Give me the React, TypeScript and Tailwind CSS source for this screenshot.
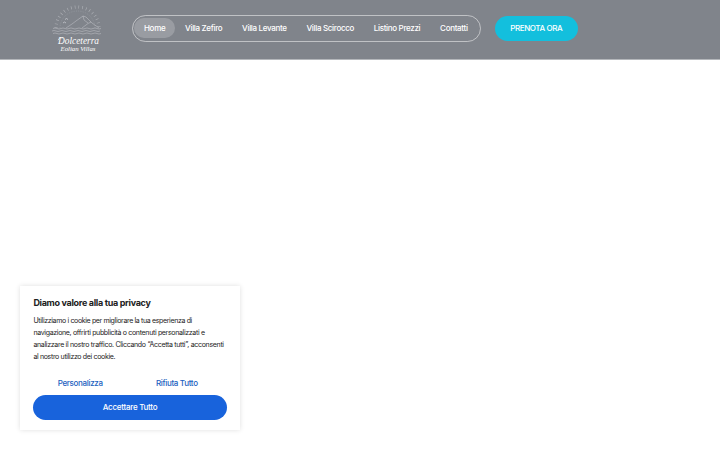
import React from 'react';

const navItems = [
  { label: 'Home', active: true },
  { label: 'Villa Zefiro' },
  { label: 'Villa Levante' },
  { label: 'Villa Scirocco' },
  { label: 'Listino Prezzi' },
  { label: 'Contatti' },
];

const Logo: React.FC = () => (
  <svg width="53" height="50" viewBox="0 0 53 50" fill="none" stroke="#dfe1e5" className="shrink-0">
    {/* sun rays */}
    <path d="M5 24A21.5 21 0 0 1 48 24" strokeWidth="3.2" strokeDasharray="0.6 3.2" opacity="0.5" />
    <path d="M9 24A17.5 17 0 0 1 44 24" strokeWidth="0.5" strokeDasharray="1 1.3" opacity="0.35" />
    {/* islands */}
    <path d="M15 24L21 20L25 17L32 12L35 13L41 19L48 24M31 24L37 19.5L40 18M32 12L33 16L37 19" strokeWidth="0.6" opacity="0.6" />
    <path d="M14 15.5l1.5-1 1.5 1M12 19l1.5-1 1.5 1" strokeWidth="0.6" />
    {/* sea */}
    <path d="M2 24.5q2-1 4 0t4 0t4 0t4 0t4 0t4 0t4 0t4 0t4 0t4 0t4 0t4 0M1 27q2-1 4 0t4 0t4 0t4 0t4 0t4 0t4 0t4 0t4 0t4 0t4 0t4 0M2 29.5q2-1 4 0t4 0t4 0t4 0t4 0t4 0t4 0t4 0t4 0t4 0t4 0t4 0" strokeWidth="0.6" opacity="0.6" />
    {/* swash on the initial */}
    <path d="M12 33.8Q7.5 33 7 36.2" stroke="#fff" strokeWidth="0.6" />
    <text x="7" y="40.3" textLength="41" lengthAdjust="spacingAndGlyphs" fill="#fff" stroke="none" fontSize="9.5" fontStyle="italic" fontFamily="'Liberation Serif', serif">Dolceterra</text>
    <text x="9.5" y="46.6" textLength="35" lengthAdjust="spacingAndGlyphs" fill="#fff" stroke="none" fontSize="5.6" fontStyle="italic" fontFamily="'Liberation Serif', serif">Eolian Villas</text>
  </svg>
);

const Header: React.FC = () => (
  <header className="flex h-[60px] items-start border-b border-[#b4b7bb] bg-[#80848b] pl-[51px] text-white">
    <div className="mt-1 w-[80.5px]">
      <Logo />
    </div>
    <nav className="mt-[15px] flex h-[26.5px] w-[349.5px] items-center rounded-full border border-white/50 pl-[1.6px]">
      {navItems.map((item) => (
        <a
          key={item.label}
          href="#"
          className={`flex h-5 shrink-0 items-center rounded-full px-[9.9px] text-[8px] font-medium tracking-[-0.32px] whitespace-nowrap ${item.active ? 'bg-white/20' : ''}`}
        >
          {item.label}
        </a>
      ))}
    </nav>
    <a
      href="#"
      className="mt-4 ml-[14px] flex h-[24.5px] w-[82.5px] items-center justify-center rounded-full bg-[#13bfdd] text-[8px] font-medium tracking-[-0.4px]"
    >
      PRENOTA ORA
    </a>
  </header>
);

const CookieBanner: React.FC = () => (
  <section className="mt-[226px] ml-5 h-[144px] w-[220px] bg-white px-[13.4px] pt-[10px] shadow-[0_0_5px_rgba(0,0,0,0.13)]">
    <h2 className="text-[9px] leading-[13px] font-bold tracking-[-0.31px] text-[#212121]">Diamo valore alla tua privacy</h2>
    <p className="mt-[6px] text-[7px] leading-3 tracking-[-0.31px] whitespace-nowrap text-[#212121]">
      <span className="tracking-[-0.35px]">Utilizziamo i cookie per migliorare la tua esperienza di</span><br />
      <span className="tracking-[-0.33px]">navigazione, offrirti pubblicità o contenuti personalizzati e</span><br />
      analizzare il nostro traffico. Cliccando “Accetta tutti”, acconsenti<br />
      <span className="tracking-[-0.34px]">al nostro utilizzo dei cookie.</span>
    </p>
    <div className="mt-[14px] grid grid-cols-2 text-[8px] leading-3 font-medium tracking-[-0.32px] text-[#1b61c0]">
      <button className="pr-[3px]">Personalizza</button>
      <button className="pr-[3px]">Rifiuta Tutto</button>
    </div>
    <button className="mt-[6px] h-[24.5px] w-full rounded-full bg-[#1863dc] text-[8px] font-medium tracking-[-0.27px] text-white">
      Accettare Tutto
    </button>
  </section>
);

export default function App() {
  return (
    <div className="h-[450px] w-[720px] overflow-hidden bg-white font-['Inter',sans-serif]">
      <Header />
      <CookieBanner />
    </div>
  );
}
